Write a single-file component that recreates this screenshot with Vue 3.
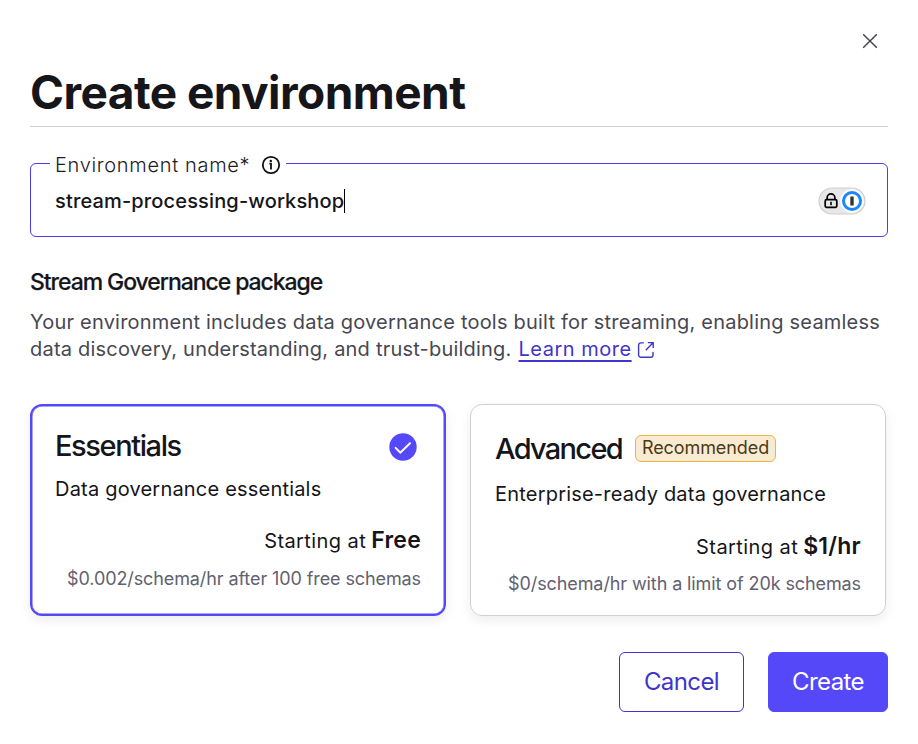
<script setup>
import { ref } from 'vue'

const name = 'stream-processing-workshop'
const selected = ref('essentials')
const packages = [
  {
    id: 'essentials',
    title: 'Essentials',
    summary: 'Data governance essentials',
    price: 'Free',
    note: '$0.002/schema/hr after 100 free schemas',
  },
  {
    id: 'advanced',
    title: 'Advanced',
    tag: 'Recommended',
    summary: 'Enterprise-ready data governance',
    price: '$1/hr',
    note: '$0/schema/hr with a limit of 20k schemas',
  },
]
</script>

<template>
  <main class="dialog">
    <div class="top">
      <svg class="close" viewBox="0 0 16 16" width="16" height="16">
        <path d="M1.2 1.2 14.8 14.8M14.8 1.2 1.2 14.8" fill="none" stroke="#3f3f4b" stroke-width="1.4" />
      </svg>
    </div>
    <h1 class="title">Create environment</h1>

    <fieldset class="field">
      <legend class="legend">
        <span class="label">Environment name*</span>
        <svg class="info" viewBox="0 0 20 20" width="20" height="20">
          <circle cx="10" cy="10" r="8.2" fill="none" stroke="#111" stroke-width="1.8" />
          <circle cx="9.8" cy="5.9" r="1.2" fill="#111" />
          <path d="M8.4 8.6h1.6v5.8" fill="none" stroke="#111" stroke-width="1.8" />
        </svg>
      </legend>
      <div class="input">
        <span class="value">{{ name }}</span><i class="caret"></i>
        <svg class="vault" viewBox="0 0 48 28" width="48" height="28">
          <rect x="1" y="1" width="46" height="26" rx="13" fill="#e8e8e8" stroke="#cfcfcf" stroke-width="1.2" />
          <path d="M9.1 12.6V10.8a3.9 3.9 0 0 1 7.8 0v1.8" fill="none" stroke="#000" stroke-width="1.7" />
          <rect x="7.2" y="12.6" width="11.6" height="7.8" rx="1.3" fill="none" stroke="#000" stroke-width="1.7" />
          <path d="M13 14.8v3.4" stroke="#000" stroke-width="1.6" />
          <circle cx="34" cy="14" r="11.8" fill="#fff" />
          <circle cx="34" cy="14" r="8.5" fill="#fff" stroke="#1a86ff" stroke-width="3" />
          <rect x="32.3" y="9.4" width="3.4" height="9.2" rx=".5" fill="#333" />
        </svg>
      </div>
    </fieldset>

    <h2 class="heading">Stream Governance package</h2>
    <p class="intro">
      <span>Your environment includes data governance tools built for streaming, enabling seamless</span><br />
      <span>data discovery, understanding, and trust-building.</span>
      <a class="link">Learn more</a>
      <svg class="external" viewBox="0 0 18 18" width="18" height="18">
        <path d="M6.8 1.9H3.9a2.3 2.3 0 0 0-2.3 2.3v9.8a2.3 2.3 0 0 0 2.3 2.3h9.8a2.3 2.3 0 0 0 2.3-2.3v-3M10.8 1.6h5.4V7M16 1.8 8.8 9.2" fill="none" stroke="#3f35cc" stroke-width="1.4" />
      </svg>
    </p>

    <section class="cards">
      <article
        v-for="p in packages"
        :key="p.id"
        :class="['card', { selected: selected === p.id }]"
        @click="selected = p.id"
      >
        <header class="card-head">
          <h3 class="card-title">{{ p.title }}</h3>
          <span v-if="p.tag" class="tag">{{ p.tag }}</span>
          <svg v-if="selected === p.id" class="check" viewBox="0 0 28 28" width="28" height="28">
            <circle cx="14" cy="14" r="13.7" fill="#5548f8" />
            <path d="m6.6 14.9 4.7 4.7 9.7-9.3" fill="none" stroke="#fff" stroke-width="2" stroke-linecap="round" />
          </svg>
        </header>
        <p class="summary">{{ p.summary }}</p>
        <p class="price"><span class="from">Starting at</span><strong class="amount">{{ p.price }}</strong></p>
        <p class="note">{{ p.note }}</p>
      </article>
    </section>

    <footer class="actions">
      <button class="btn cancel">Cancel</button>
      <button class="btn create">Create</button>
    </footer>
  </main>
</template>

<style>
body {
  background: #fff;
}
h1, h2, h3, p {
  margin: 0;
}
svg {
  display: block;
}
</style>

<style scoped>
.dialog {
  box-sizing: border-box;
  width: 918px;
  height: 744px;
  padding: 33px 30px 0;
  font-family: Inter, "Liberation Sans", sans-serif;
  color: #15151a;
  background: #fff;
  white-space: nowrap;
}
.top {
  display: flex;
  justify-content: flex-end;
  height: 16px;
  padding-right: 10px;
}
.title {
  height: 77px;
  border-bottom: 1px solid #d0d0d4;
  font-size: 46px;
  line-height: 87px;
  font-weight: 700;
  letter-spacing: -0.56px;
}
.field {
  box-sizing: border-box;
  height: 86px;
  min-width: 0;
  margin: 24px 0 0;
  padding: 0 21px 0 19px;
  border: 1px solid #4a3df0;
  border-radius: 6px;
}
.legend {
  display: flex;
  align-items: center;
  gap: 11px;
  box-sizing: border-box;
  width: 236px;
  height: 25px;
  padding: 3px 5px 0;
  font-size: 20px;
  line-height: 24px;
  color: #1c1c22;
  font-weight: 300;
  letter-spacing: 0.67px;
}
.label {
  width: 195px;
}
.input {
  display: flex;
  align-items: center;
  height: 49px;
  padding-left: 5px;
  font-size: 20px;
  font-weight: 500;
  letter-spacing: 0.15px;
}
.caret {
  width: 1px;
  height: 24px;
  margin-left: -0.5px;
  background: #000;
}
.vault {
  margin-left: auto;
}
.heading {
  margin-top: 30px;
  font-size: 23px;
  line-height: 30px;
  font-weight: 500;
  letter-spacing: -1.06px;
  -webkit-text-stroke: 0.2px currentColor;
}
.intro {
  margin-top: 12px;
  font-size: 20px;
  line-height: 27px;
  color: #474752;
  letter-spacing: 0.21px;
}
.link {
  margin-left: 7px;
  color: #3f35cc;
  letter-spacing: 0.5px;
  text-decoration: underline;
  text-decoration-thickness: 2px;
  text-underline-offset: 4px;
}
.external {
  display: inline-block;
  margin-left: 5px;
  vertical-align: -3px;
}
.cards {
  display: flex;
  gap: 24px;
  margin-top: 41px;
}
.card {
  box-sizing: border-box;
  width: 416px;
  height: 212px;
  padding: 27px 24px 0;
  border: 1px solid #d0d0d4;
  border-radius: 12px;
  box-shadow: 0 4px 12px rgba(20, 20, 40, 0.08);
}
.card.selected {
  padding: 23px 23px 0;
  border: 2px solid #5548f8;
  box-shadow: inset 0 0 0 0.5px #5548f8, 0 4px 12px rgba(20, 20, 40, 0.08);
}
.card-head {
  display: flex;
  align-items: center;
  height: 34px;
}
.card-title {
  font-size: 29px;
  line-height: 34px;
  font-weight: 500;
  letter-spacing: -1.4px;
}
.card:not(.selected) .card-title {
  letter-spacing: -1.7px;
}
.tag {
  box-sizing: border-box;
  height: 27px;
  margin: -1px 0 0 13px;
  padding: 0 6px;
  border: 1px solid #efb43e;
  border-radius: 6px;
  background: #f8ebd2;
  color: #4c3a14;
  font-size: 18px;
  line-height: 24px;
  letter-spacing: -0.09px;
}
.check {
  margin: 1px 4px 0 auto;
}
.summary {
  margin-top: 15px;
  font-size: 20px;
  line-height: 26px;
  letter-spacing: 0.2px;
}
.selected .summary {
  margin-top: 13px;
}
.price {
  display: flex;
  justify-content: flex-end;
  align-items: baseline;
  gap: 5px;
  margin-top: 24px;
  font-size: 20px;
  line-height: 30px;
}
.selected .price {
  margin-top: 23px;
}
.from {
  letter-spacing: 0.42px;
}
.amount {
  font-size: 23px;
  font-weight: 600;
  letter-spacing: 0.25px;
}
.note {
  margin-top: 10px;
  font-size: 18px;
  line-height: 24px;
  text-align: right;
  color: #626170;
  letter-spacing: -0.1px;
}
.selected .note {
  margin-top: 11px;
}
.actions {
  display: flex;
  justify-content: flex-end;
  gap: 24px;
  margin-top: 36px;
}
.btn {
  box-sizing: border-box;
  height: 60px;
  padding: 0;
  border: 1px solid #3f35cc;
  border-radius: 6px;
  font: 400 24px/58px Inter, "Liberation Sans", sans-serif;
  letter-spacing: -0.6px;
}
.cancel {
  width: 125px;
  color: #3f35cc;
  background: #fff;
}
.create {
  width: 120px;
  color: #fff;
  background: #5548f8;
  border-color: #5548f8;
}
</style>
